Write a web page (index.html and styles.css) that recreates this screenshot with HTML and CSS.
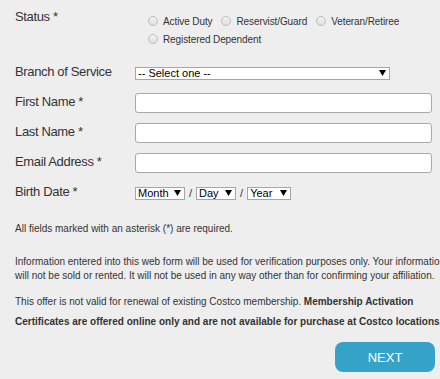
FILE: index.html
```html
<!DOCTYPE html>
<html lang="en">
<head>
  <meta charset="UTF-8" />
  <meta name="viewport" content="width=device-width, initial-scale=1.0"/>
  <title>Military Verification</title>
  <link rel="stylesheet" href="styles.css">
</head>
<body>

  <form class="verify-form" id="verifyForm">
    <div class="row status-row">
      <label class="field-label">Status *</label>
      <div class="radios">
        <label class="radio"><input type="radio" name="status" value="active" /> Active Duty</label>
        <label class="radio"><input type="radio" name="status" value="reservist" /> Reservist/Guard</label>
        <label class="radio"><input type="radio" name="status" value="veteran" /> Veteran/Retiree</label>
        <label class="radio"><input type="radio" name="status" value="dependent" /> Registered Dependent</label>
      </div>
    </div>

    <div class="row">
      <label class="field-label" for="branch">Branch of Service</label>
      <span class="select select-branch">
        <select id="branch" name="branch">
          <option>-- Select one --</option>
          <option>Army</option>
          <option>Navy</option>
          <option>Air Force</option>
          <option>Marine Corps</option>
          <option>Coast Guard</option>
        </select>
        <svg class="arrow" width="7" height="6" viewBox="0 0 7 6"><path d="M0 0H7L3.5 6Z" fill="#000"/></svg>
      </span>
    </div>

    <div class="row">
      <label class="field-label" for="firstName">First Name *</label>
      <input class="text-input" type="text" id="firstName" name="firstName" />
    </div>

    <div class="row">
      <label class="field-label" for="lastName">Last Name *</label>
      <input class="text-input" type="text" id="lastName" name="lastName" />
    </div>

    <div class="row">
      <label class="field-label" for="email">Email Address *</label>
      <input class="text-input" type="text" id="email" name="email" />
    </div>

    <div class="row">
      <label class="field-label">Birth Date *</label>
      <div class="dob">
        <span class="select select-month">
          <select name="month"><option>Month</option></select>
          <svg class="arrow" width="7" height="6" viewBox="0 0 7 6"><path d="M0 0H7L3.5 6Z" fill="#000"/></svg>
        </span>
        <span class="slash">/</span>
        <span class="select select-day">
          <select name="day"><option>Day</option></select>
          <svg class="arrow" width="7" height="6" viewBox="0 0 7 6"><path d="M0 0H7L3.5 6Z" fill="#000"/></svg>
        </span>
        <span class="slash">/</span>
        <span class="select select-year">
          <select name="year"><option>Year</option></select>
          <svg class="arrow" width="7" height="6" viewBox="0 0 7 6"><path d="M0 0H7L3.5 6Z" fill="#000"/></svg>
        </span>
      </div>
    </div>

    <p class="note note-required">All fields marked with an asterisk (*) are required.</p>
    <p class="note note-info">Information entered into this web form will be used for verification purposes only. Your information will not be sold or rented. It will not be used in any way other than for confirming your affiliation.</p>
    <p class="note note-offer">This offer is not valid for renewal of existing Costco membership. <b>Membership Activation Certificates are offered online only and are not available for purchase at Costco locations.</b></p>

    <div class="actions">
      <button type="submit">NEXT</button>
    </div>
  </form>

</body>
</html>
```

FILE: styles.css
```css
html, body {
  margin: 0;
  background: #eeeeee;
  overflow: hidden;
}

body {
  font-family: "Liberation Sans", Arial, sans-serif;
  color: #333;
}

.verify-form {
  width: 435px;
  padding-left: 15px;
}

.row {
  display: flex;
  align-items: center;
  height: 30px;
}

.field-label {
  width: 120px;
  flex: none;
  font-size: 13px;
  line-height: 15px;
  letter-spacing: -0.35px;
  margin-bottom: 4px;
}

.status-row {
  align-items: flex-start;
  height: 58px;
}

.status-row .field-label {
  margin-top: 9px;
}

.radios {
  display: flex;
  flex-wrap: wrap;
  width: 280px;
  margin-top: 12px;
  margin-left: 13px;
  column-gap: 9px;
}

.radio {
  display: flex;
  align-items: center;
  gap: 5px;
  height: 18px;
  font-size: 10px;
  letter-spacing: -0.1px;
}

.radio input {
  appearance: none;
  width: 10px;
  height: 10px;
  margin: 0;
  border: 1px solid #bdbdbd;
  border-radius: 50%;
  background: linear-gradient(#f2f2f2, #dedede);
}

.select {
  position: relative;
  display: flex;
  height: 13px;
  flex: none;
}

.select select {
  appearance: none;
  display: block;
  box-sizing: border-box;
  width: 100%;
  height: 13px;
  margin: 0;
  padding: 0 0 0 2px;
  border: 1px solid #a6a6a6;
  border-radius: 0;
  background: #fff;
  font-family: inherit;
  font-size: 11px;
  line-height: 11px;
  color: #000;
}

.select .arrow {
  position: absolute;
  right: 4px;
  top: 3px;
  pointer-events: none;
}

.select-branch { width: 255px; }
.select-month { width: 50px; }
.select-day { width: 40px; }
.select-year { width: 44px; }

.dob {
  display: flex;
  align-items: center;
}

.slash {
  font-size: 11px;
  padding: 0 4px;
}

.text-input {
  box-sizing: border-box;
  width: 297px;
  height: 20px;
  margin: 0;
  border: 1px solid #a9a9a9;
  border-radius: 3px;
  background: #fff;
}

.note {
  font-size: 10px;
  margin: 0;
}

.note-required {
  line-height: 14px;
  margin-top: 14px;
}

.note-info {
  line-height: 14px;
  margin-top: 19px;
}

.note-offer {
  line-height: 20px;
  margin-top: 9px;
}

.actions {
  display: flex;
  justify-content: flex-end;
  width: 420px;
  margin-top: 10px;
}

.actions button {
  width: 100px;
  height: 30px;
  border: none;
  border-radius: 8px;
  background: #35a3c7;
  color: #fff;
  font-family: inherit;
  font-size: 13px;
  cursor: pointer;
}
```
